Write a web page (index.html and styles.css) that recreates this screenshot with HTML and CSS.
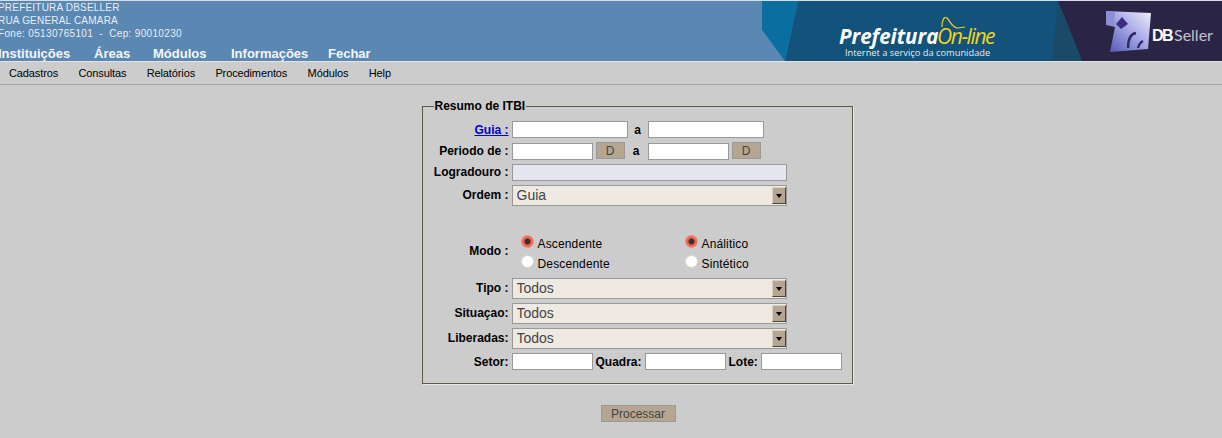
FILE: index.html
```html
<!DOCTYPE html>
<html lang="pt-BR">
<head>
<meta charset="UTF-8">
<title>Resumo de ITBI</title>
<link rel="stylesheet" href="styles.css">
</head>
<body>

<header class="topo">
    <div class="topo-esq">
        <div class="dados">
            <div>PREFEITURA DBSELLER</div>
            <div>RUA GENERAL CAMARA</div>
            <div class="fone">Fone: 05130765101 &nbsp;-&nbsp; Cep: 90010230</div>
        </div>
        <nav class="menu-principal">
            <a>Instituições</a>
            <a>Áreas</a>
            <a>Módulos</a>
            <a>Informações</a>
            <a>Fechar</a>
        </nav>
    </div>
    <svg class="banner" width="460" height="60" viewBox="0 0 460 60">
        <defs>
            <linearGradient id="cubo" x1="1" y1="0" x2="0" y2="1">
                <stop offset="0" stop-color="#f1f1fb"/>
                <stop offset="0.45" stop-color="#a9aae6"/>
                <stop offset="1" stop-color="#4d52b4"/>
            </linearGradient>
            <filter id="suave"><feGaussianBlur stdDeviation="0.7"/></filter>
        </defs>
        <rect width="460" height="60" fill="#5b87b3"/>
        <polygon points="0,0 36,0 23,60 0,29" fill="#0a6fa0"/>
        <polygon points="36,0 460,0 460,60 23,60" fill="#13527a"/>
        <polygon points="296,0 460,0 460,60 320,60" fill="#2a2545"/>
        <polygon points="296,0 320,60 290,60" fill="#1b4a68"/>
        <text class="b-pref" x="77" y="43">Prefeitura</text>
        <text class="b-online" x="175" y="43">On-line</text>
        <path d="M180 26 C180 19 182 15 185 17 C188 20 190 27 196 27 L203 26" fill="none" stroke="#f2d21c" stroke-width="1.2"/>
        <text class="b-sub" x="83" y="55">Internet a serviço da comunidade</text>
        <g filter="url(#suave)">
            <polygon points="344,10 389,12 386,48 348,51 353,26 344,24" fill="url(#cubo)"/>
            <polygon points="344,10 353,11 352,25 344,23" fill="#8d8ed6"/>
            <polygon points="360,16 366,23 359,28 354,23" fill="#3d2f7d"/>
            <path d="M366 47 C366 38 368 33 374 32 M376 47 C377 43 379 41 381 40" fill="none" stroke="#2f2c63" stroke-width="2.4"/>
        </g>
        <text class="b-db" x="390" y="40">DB</text>
        <text class="b-seller" x="412" y="40">Seller</text>
    </svg>
</header>

<nav class="menu-sec">
    <a>Cadastros</a>
    <a>Consultas</a>
    <a>Relatórios</a>
    <a>Procedimentos</a>
    <a>Módulos</a>
    <a>Help</a>
</nav>

<main class="conteudo">
    <form class="form-itbi">
        <fieldset class="quadro">
            <legend>Resumo de ITBI</legend>

            <div class="linha linha-guia">
                <label class="rotulo"><a class="link-guia" href="#">Guia :</a></label>
                <input class="campo c-115" type="text">
                <b class="sep">a</b>
                <input class="campo c-115" type="text">
            </div>
            <div class="linha">
                <label class="rotulo sobe">Periodo de :</label>
                <input class="campo c-80" type="text">
                <button class="btn btn-d" type="button">D</button>
                <b class="sep sep-largo sobe">a</b>
                <input class="campo c-80" type="text">
                <button class="btn btn-d" type="button">D</button>
            </div>
            <div class="linha">
                <label class="rotulo sobe">Logradouro :</label>
                <input class="campo campo-ro" type="text" readonly>
            </div>
            <div class="linha">
                <label class="rotulo sobe">Ordem :</label>
                <span class="combo"><select><option>Guia</option></select><i class="seta"></i></span>
            </div>

            <div class="linha linha-modo">
                <label class="rotulo">Modo :</label>
                <div class="radios">
                    <label><input type="radio" name="ordem" checked>Ascendente</label>
                    <label><input type="radio" name="tipo" checked>Análitico</label>
                    <label><input type="radio" name="ordem">Descendente</label>
                    <label><input type="radio" name="tipo">Sintético</label>
                </div>
            </div>

            <div class="linha">
                <label class="rotulo sobe">Tipo :</label>
                <span class="combo"><select><option>Todos</option></select><i class="seta"></i></span>
            </div>
            <div class="linha">
                <label class="rotulo sobe">Situaçao:</label>
                <span class="combo"><select><option>Todos</option></select><i class="seta"></i></span>
            </div>
            <div class="linha">
                <label class="rotulo sobe">Liberadas:</label>
                <span class="combo"><select><option>Todos</option></select><i class="seta"></i></span>
            </div>
            <div class="linha">
                <label class="rotulo">Setor:</label>
                <input class="campo c-80" type="text">
                <label class="rot-mini">Quadra:</label>
                <input class="campo c-80" type="text">
                <label class="rot-mini">Lote:</label>
                <input class="campo c-80" type="text">
            </div>
        </fieldset>
        <button class="btn btn-processar" type="button">Processar</button>
    </form>
</main>

</body>
</html>
```

FILE: styles.css
```css
* {
    box-sizing: border-box;
}
body {
    margin: 0;
    background-color: #cccccc;
    font-family: "Liberation Sans", Arial, sans-serif;
    font-size: 12px;
    color: #000;
}

/* topo azul */
.topo {
    display: flex;
    justify-content: space-between;
    height: 62px;
    border-top: 1px solid #d5dde6;
    border-bottom: 1px solid #e4e4e4;
    background-color: #5b87b3;
}
.topo-esq {
    overflow: hidden;
}
.dados {
    margin-left: -2px;
    color: #e8eef5;
    font-size: 10px;
    line-height: 13px;
    letter-spacing: 0.2px;
}
.fone {
    letter-spacing: 0.33px;
}
.menu-principal {
    display: flex;
    margin: 6px 0 0 -2px;
    color: #f4f6f9;
    font-size: 13px;
    font-weight: bold;
    line-height: 15px;
}
.menu-principal a:nth-child(1) {
    width: 96px;
}
.menu-principal a:nth-child(2) {
    width: 59px;
}
.menu-principal a:nth-child(3) {
    width: 78px;
}
.menu-principal a:nth-child(4) {
    width: 97px;
}
.banner {
    display: block;
    flex: none;
}
.b-pref {
    fill: #fff;
    font: italic bold 20.5px "Open Sans", sans-serif;
}
.b-online {
    fill: #f2d21c;
    font: italic 21px "Open Sans", sans-serif;
    letter-spacing: -1.4px;
}
.b-sub {
    fill: #e6edf2;
    font: 9.3px "Open Sans", sans-serif;
}
.b-db {
    fill: #fff;
    font: bold 16px "Liberation Sans", sans-serif;
    letter-spacing: -1.5px;
}
.b-seller {
    fill: #c0c0d0;
    font: 16px "Lato", sans-serif;
}

/* segundo menu */
.menu-sec {
    display: flex;
    gap: 20.4px;
    height: 23px;
    padding-left: 9px;
    border-bottom: 1px solid #a3a3a3;
    font-size: 11px;
    line-height: 22px;
    letter-spacing: -0.12px;
}

/* formulario */
.conteudo {
    padding: 14px 0 0 52px;
}
.form-itbi {
    display: flex;
    flex-direction: column;
    align-items: center;
}
.quadro {
    width: 431px;
    margin: 0;
    padding: 6px 0 11px;
    border: 1px solid #5f5847;
    box-shadow: 1px 1px 0 #e8e8e8;
}
.quadro legend {
    margin-left: 11px;
    padding: 0 1px;
    font-weight: bold;
    font-size: 12px;
    line-height: 14px;
}
.linha {
    display: flex;
    align-items: center;
    padding: 2px 0;
    font-weight: bold;
}
.linha-guia {
    padding-bottom: 3px;
}
.rotulo {
    width: 86px;
    margin-right: 3px;
    text-align: right;
}
.sobe {
    margin-bottom: 2px;
}
.link-guia {
    color: #0000cc;
}
.sep {
    width: 20px;
    text-align: center;
}
.sep-largo {
    width: 23px;
}
.campo {
    height: 17px;
    padding: 0 2px;
    border: 1px solid #999999;
    background-color: #fff;
    outline: none;
}
.c-115 {
    width: 116px;
}
.c-80 {
    width: 81px;
}
.campo-ro {
    width: 275px;
    background-color: #e6e6f2;
}
.rot-mini {
    margin: 0 3px;
}
.btn {
    border: 1px solid #999999;
    background-color: #b5a691;
    color: #444;
    font-family: "Liberation Sans", Arial, sans-serif;
    font-size: 12px;
    padding: 0;
}
.btn-d {
    width: 29px;
    height: 17px;
    margin: -2px 0 0 3px;
}
.btn-processar {
    width: 75px;
    height: 17px;
    margin: 21px 0 0 2px;
}

/* combo com a seta do tema antigo */
.combo {
    position: relative;
    display: block;
    width: 275px;
    height: 21px;
}
.combo select {
    display: block;
    width: 100%;
    height: 100%;
    padding: 0 0 2px 4px;
    border: 1px solid #999999;
    border-radius: 0;
    background-color: #eeeae2;
    color: #444;
    font-family: "Liberation Sans", Arial, sans-serif;
    font-size: 14px;
    appearance: none;
    -webkit-appearance: none;
    outline: none;
}
.seta {
    position: absolute;
    top: 2px;
    right: 1px;
    width: 14px;
    height: 17px;
    border: 1px solid;
    border-color: #d9d2c4 #4a4438 #4a4438 #d9d2c4;
    background-color: #b5a691;
}
.seta::after {
    content: "";
    position: absolute;
    top: 6px;
    left: 3px;
    border: 3px solid transparent;
    border-top: 4px solid #000;
    border-bottom: 0;
}

/* radios */
.linha-modo {
    align-items: flex-start;
    height: 68px;
    padding: 0;
}
.linha-modo .rotulo {
    margin-top: 36px;
}
.radios {
    display: grid;
    grid-template-columns: 164px 100px;
    grid-auto-rows: 20px;
    margin: 26px 0 0 9px;
    font-weight: normal;
    letter-spacing: 0.15px;
}
.radios label {
    display: flex;
    align-items: center;
}
.radios input {
    width: 13px;
    height: 13px;
    margin: -5px 4px 0 0;
    border: 1px solid #d8d8d0;
    border-radius: 50%;
    background-color: #fff;
    appearance: none;
    -webkit-appearance: none;
}
.radios input:checked {
    border-color: #f08a78;
    background: radial-gradient(circle, #3a3030 0, #3a3030 2.5px, #ee5f4c 3.5px, #f5826f 100%);
}
```
